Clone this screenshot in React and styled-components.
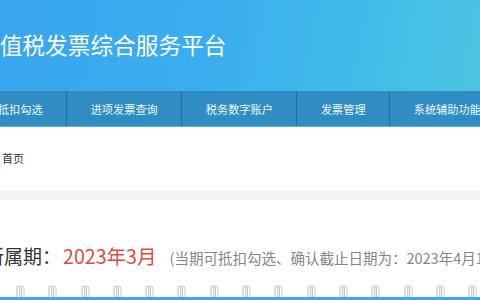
import React from "react";
import styled, { createGlobalStyle } from "styled-components";

const Global = createGlobalStyle`
  html, body { margin: 0; padding: 0; background: #fff; }
  body {
    width: 480px; height: 300px; overflow: hidden;
    font-family: "Noto Sans CJK SC", "Noto Sans", sans-serif;
  }
`;

const Page = styled.div`
  width: 480px;
  height: 300px;
  overflow: hidden;
  display: flex;
  flex-direction: column;
`;

const Header = styled.header`
  height: 91px;
  flex: none;
  display: flex;
  align-items: center;
  background: linear-gradient(100deg, #38a6ef 0%, #3aaeee 45%, #44bde8 80%, #4cc4e2 100%);
`;

const Title = styled.h1`
  margin: 0 0 0 -23px;
  font-size: 22.7px;
  font-weight: 400;
  color: #fff;
  white-space: nowrap;
  line-height: 1;
`;

const Nav = styled.nav`
  height: 36px;
  flex: none;
  display: flex;
  background: #2f8dc3;
  border-bottom: 1px solid #5aaedb;
  box-sizing: border-box;
  margin-left: -48px;
  white-space: nowrap;
`;

const NavItem = styled.div`
  flex: none;
  display: flex;
  align-items: center;
  padding: 0 23.5px;
  font-size: 11.2px;
  color: #eef6fb;
  border-right: 1px solid #22709f;
`;

const Crumbs = styled.div`
  height: 64px;
  flex: none;
  box-sizing: border-box;
  padding: 23px 0 0 2px;
  font-size: 11px;
  line-height: 16px;
  color: #333;
`;

const Band = styled.div`
  height: 9px;
  flex: none;
  background: #f4f4f4;
`;

const Main = styled.section`
  height: 85px;
  flex: none;
  box-sizing: border-box;
  padding-top: 44px;
`;

const PeriodLine = styled.div`
  display: flex;
  align-items: baseline;
  white-space: nowrap;
  margin-left: -53px;
  line-height: 24px;
`;

const Label = styled.span`
  font-size: 19px;
  color: #333;
`;

const Period = styled.span`
  font-size: 19.6px;
  color: #e04a3f;
  margin-left: 2px;
`;

const Note = styled.span`
  font-size: 14.5px;
  color: #858585;
  margin-left: 13px;
`;

const Binding = styled.div`
  height: 12px;
  flex: none;
  display: flex;
  align-items: flex-end;
  gap: 23.3px;
  padding-left: 16px;
  overflow: hidden;
`;

const BlueBar = styled.div`
  height: 3px;
  flex: none;
  background: #3aaaf0;
`;

const Ring = () => (
  <svg width="9" height="12" viewBox="0 0 9 12" style={{ flex: "none", display: "block" }}>
    <path d="M1 12 V4.5 Q1 1 3.2 1 Q5.4 1 5.4 4.5 V12" fill="none" stroke="#c4c4c4" strokeWidth="1.1" />
    <path d="M3.6 12 V4.5 Q3.6 1 5.8 1 Q8 1 8 4.5 V12" fill="none" stroke="#cfcfcf" strokeWidth="1.1" />
  </svg>
);

const navItems = ["发票抵扣勾选", "进项发票查询", "税务数字账户", "发票管理", "系统辅助功能"];

export default function App() {
  return (
    <Page>
      <Global />
      <Header>
        <Title>增值税发票综合服务平台</Title>
      </Header>
      <Nav>
        {navItems.map((t) => (
          <NavItem key={t}>{t}</NavItem>
        ))}
      </Nav>
      <Crumbs>首页</Crumbs>
      <Band />
      <Main>
        <PeriodLine>
          <Label>税款所属期：</Label>
          <Period>2023年3月</Period>
          <Note>(当期可抵扣勾选、确认截止日期为：2023年4月15日)</Note>
        </PeriodLine>
      </Main>
      <Binding>
        {Array.from({ length: 15 }).map((_, i) => (
          <Ring key={i} />
        ))}
      </Binding>
      <BlueBar />
    </Page>
  );
}
